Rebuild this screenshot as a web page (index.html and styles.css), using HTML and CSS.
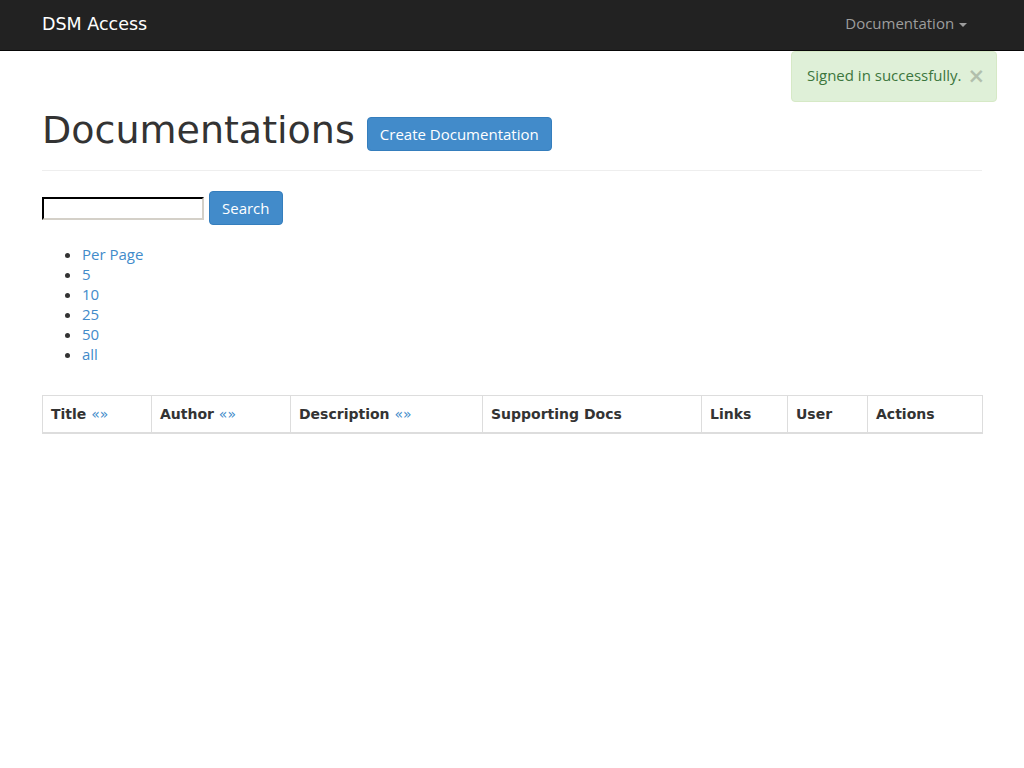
FILE: index.html
```html
<!DOCTYPE html>
<html lang="en">
<head>
<meta charset="utf-8">
<title>DSM Access</title>
<link rel="stylesheet" href="styles.css">
</head>
<body>
<nav class="navbar">
  <div class="container nav-inner">
    <a class="brand" href="#">DSM Access</a>
    <ul class="nav-right">
      <li><a class="dropdown" href="#">Documentation <span class="caret"></span></a></li>
    </ul>
  </div>
</nav>
<div class="alert">
  <span class="alert-text">Signed in successfully.</span>
  <span class="close">×</span>
</div>
<main class="container main">
  <div class="page-header">
    <h1>Documentations <a class="btn" href="#">Create Documentation</a></h1>
  </div>
  <form class="search-form">
    <input type="text" class="search-input">
    <button type="button" class="btn">Search</button>
  </form>
  <ul class="per-page">
    <li><a href="#">Per Page</a></li>
    <li><a href="#">5</a></li>
    <li><a href="#">10</a></li>
    <li><a href="#">25</a></li>
    <li><a href="#">50</a></li>
    <li><a href="#">all</a></li>
  </ul>
  <table class="table">
    <colgroup>
      <col class="c1"><col class="c2"><col class="c3"><col class="c4"><col class="c5"><col class="c6"><col class="c7">
    </colgroup>
    <thead>
      <tr>
        <th>Title <a class="sort" href="#">«»</a></th>
        <th>Author <a class="sort" href="#">«»</a></th>
        <th>Description <a class="sort" href="#">«»</a></th>
        <th>Supporting Docs</th>
        <th>Links</th>
        <th>User</th>
        <th>Actions</th>
      </tr>
    </thead>
    <tbody></tbody>
  </table>
</main>
</body>
</html>
```
FILE: styles.css
```css
* { box-sizing: border-box; }
html, body { margin: 0; padding: 0; }
body {
  font-family: "DejaVu Sans", sans-serif;
  font-size: 14px;
  line-height: 20px;
  color: #333;
  background: #fff;
}
a { color: #428bca; text-decoration: none; }
.container {
  width: 970px;
  margin: 0 auto;
  padding: 0 15px;
}
.main { padding-top: 20px; }
.navbar {
  height: 51px;
  background: #222;
  border-bottom: 1px solid #080808;
}
.nav-inner {
  display: flex;
  justify-content: space-between;
  align-items: stretch;
  height: 50px;
}
.brand {
  font-family: "DejaVu Sans", sans-serif;
  font-size: 17.5px;
  line-height: 20px;
  color: #fff;
  padding: 14px 0 16px;
}
.nav-right {
  list-style: none;
  margin: 0;
  padding: 0;
  display: flex;
}
.dropdown {
  display: block;
  padding: 13px 15px 17px;
  font-family: "Open Sans", sans-serif;
  font-size: 15px;
  line-height: 20px;
  color: #9d9d9d;
}
.caret {
  display: inline-block;
  width: 0;
  height: 0;
  margin-left: 1px;
  vertical-align: middle;
  border-top: 4px solid #9d9d9d;
  border-left: 4px solid transparent;
  border-right: 4px solid transparent;
}
.alert {
  position: absolute;
  top: 51px;
  right: 27px;
  width: 206px;
  height: 51px;
  display: flex;
  align-items: center;
  padding: 0 11px 3px 15px;
  background: #dff0d8;
  border: 1px solid #d6e9c6;
  border-radius: 4px;
  color: #3c763d;
  font-family: "Open Sans", sans-serif;
  font-size: 15px;
}
.alert-text { flex: 1; white-space: nowrap; }
.close {
  font-family: "DejaVu Sans", sans-serif;
  font-size: 21px;
  font-weight: bold;
  color: #000;
  opacity: 0.2;
  line-height: 20px;
  margin-top: 2px;
}
.page-header {
  margin: 40px 0 20px;
  padding-bottom: 9px;
  border-bottom: 1px solid #eee;
}
h1 {
  margin: 20px 0 10px;
  font-size: 38px;
  font-weight: 500;
  line-height: 39.6px;
  color: #333;
}
.btn {
  display: inline-block;
  padding: 6px 12px;
  font-family: "Open Sans", sans-serif;
  font-size: 15px;
  font-weight: normal;
  line-height: 20px;
  color: #fff;
  background: #428bca;
  border: 1px solid #357ebd;
  border-radius: 4px;
  vertical-align: middle;
  cursor: pointer;
}
h1 .btn { vertical-align: 3px; }
.search-form {
  display: flex;
  align-items: center;
  gap: 5px;
  margin: 0 0 19px;
}
.search-input {
  width: 162px;
  height: 23px;
  margin: 0;
  padding: 1px 2px;
  border-width: 2px;
  border-style: inset;
  border-color: #000 #d4d0c8 #d4d0c8 #000;
  background: #fff;
  font-size: 13px;
}
.per-page {
  margin: 0 0 31px;
  padding-left: 40px;
  font-family: "Open Sans", sans-serif;
  font-size: 15px;
  line-height: 20px;
}
.table {
  width: 100%;
  border-collapse: collapse;
  border-spacing: 0;
  table-layout: fixed;
  border: 1px solid #ddd;
}
.c1 { width: 109px; }
.c2 { width: 139px; }
.c3 { width: 192px; }
.c4 { width: 219px; }
.c5 { width: 86px; }
.c6 { width: 80px; }
.c7 { width: 115px; }
.table th {
  text-align: left;
  padding: 8px;
  line-height: 20px;
  font-weight: bold;
  border: 1px solid #ddd;
  border-bottom: 2px solid #ddd;
  white-space: nowrap;
}
.sort { font-weight: normal; }
```
